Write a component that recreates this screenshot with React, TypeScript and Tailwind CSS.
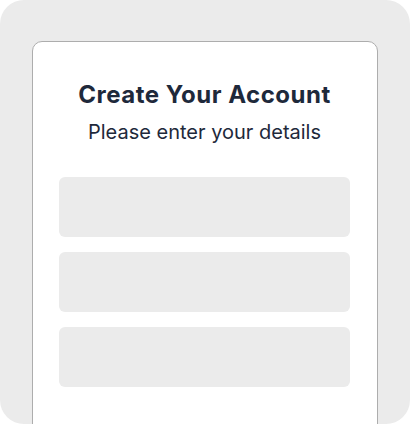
export default function App() {
  return (
    <div className="bg-white w-[410px] h-[425px]" style={{ fontFamily: "Inter, 'Noto Sans', sans-serif" }}>
      <div className="h-[424px] bg-[#ebebeb] rounded-3xl px-8 pt-[41px] overflow-hidden">
        <div className="bg-white border border-[#adadad] rounded-[10px] h-[420px] pl-[26px] pr-[27px] pt-[37px]">
          <h1 className="text-2xl leading-8 font-bold tracking-[0.5px] text-[#1e293b] text-center">Create Your Account</h1>
          <p className="mt-[7px] text-xl leading-7 text-[#1e293b] text-center">Please enter your details</p>
          <div className="mt-[31px] flex flex-col gap-[15px]">
            <div className="h-[60px] bg-[#ebebeb] rounded-md" />
            <div className="h-[60px] bg-[#ebebeb] rounded-md" />
            <div className="h-[60px] bg-[#ebebeb] rounded-md" />
          </div>
        </div>
      </div>
    </div>
  );
}
